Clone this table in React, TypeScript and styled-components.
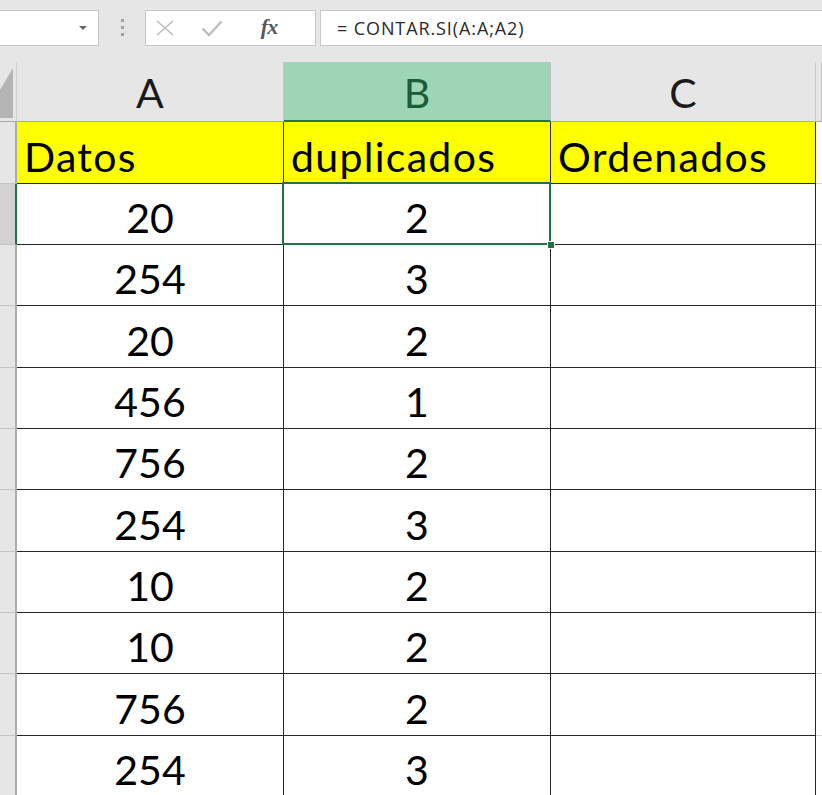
import React from "react";
import styled, { createGlobalStyle } from "styled-components";

const Global = createGlobalStyle`
  html, body { margin: 0; padding: 0; background: #e6e6e6; overflow: hidden; }
  #root { width: 822px; height: 795px; overflow: hidden; }
`;

const CELL_FONT = `"Lato", "Open Sans", sans-serif`;

const Page = styled.div`
  width: 822px;
  height: 795px;
  background: #e6e6e6;
  display: flex;
  flex-direction: column;
  overflow: hidden;
`;

const Toolbar = styled.div`
  height: 62px;
  box-sizing: border-box;
  padding-top: 10px;
  display: flex;
  align-items: flex-start;
  flex-shrink: 0;
`;

const Box = styled.div<{ $w?: number; $ml?: number; $grow?: boolean }>`
  height: 36px;
  box-sizing: border-box;
  background: #fff;
  border: 1px solid #c6c6c6;
  display: flex;
  align-items: center;
  margin-left: ${(p) => p.$ml ?? 0}px;
  ${(p) => (p.$w ? `width: ${p.$w}px;` : "")}
  ${(p) => (p.$grow ? "flex: 1; border-right: none;" : "")}
`;

const NameBox = styled(Box)`
  border-left: none;
  justify-content: flex-end;
  padding-right: 11px;
`;

const Caret = styled.div`
  width: 0;
  height: 0;
  border-left: 4px solid transparent;
  border-right: 4px solid transparent;
  border-top: 4px solid #666;
`;

const Grip = styled.div`
  width: 3px;
  margin: 9px 0 0 22px;
  display: flex;
  flex-direction: column;
  gap: 4px;
  span {
    display: block;
    width: 3px;
    height: 3px;
    background: #a0a0a0;
  }
`;

const IconSlot = styled.div<{ $w: number }>`
  width: ${(p) => p.$w}px;
  display: flex;
  align-items: center;
  justify-content: center;
`;

const Fx = styled.span`
  font-family: "Liberation Serif", "DejaVu Serif", serif;
  font-style: italic;
  font-weight: bold;
  font-size: 22px;
  color: #595959;
  letter-spacing: -1px;
  line-height: 1;
  margin-top: -2px;
`;

const FormulaText = styled.span`
  font-family: "Open Sans", "Noto Sans", sans-serif;
  font-size: 18px;
  letter-spacing: 0.9px;
  color: #2b2b2b;
  padding-left: 16px;
  white-space: nowrap;
`;

const Sheet = styled.div<{ $rows: string }>`
  display: grid;
  grid-template-columns: 17px 267px 267px 265px 1fr;
  grid-template-rows: ${(p) => p.$rows};
  flex-shrink: 0;
`;

const Corner = styled.div`
  background: #e6e6e6;
  border-right: 1px solid #d0d0d0;
  border-bottom: 1px solid #ababab;
  box-sizing: border-box;
  position: relative;
  svg { position: absolute; left: 0; top: 0; }
`;

const ColHead = styled.div<{ $active?: boolean }>`
  box-sizing: border-box;
  background: ${(p) => (p.$active ? "#9fd5b7" : "#e6e6e6")};
  color: ${(p) => (p.$active ? "#1b5e36" : "#1a1a1a")};
  border-right: 1px solid ${(p) => (p.$active ? "#c0c0c0" : "#c8c8c8")};
  border-bottom: ${(p) => (p.$active ? "2px solid #217346" : "1px solid #ababab")};
  font-family: ${CELL_FONT};
  font-size: 41px;
  display: flex;
  align-items: center;
  justify-content: center;
  padding-top: 2px;
`;

const RowHead = styled.div<{ $active?: boolean }>`
  box-sizing: border-box;
  background: ${(p) => (p.$active ? "#d2d2d2" : "#e6e6e6")};
  border-right: ${(p) => (p.$active ? "2px solid #217346" : "2px solid #ababab")};
  border-bottom: 1px solid #c4c4c4;
`;

const Cell = styled.div<{ $fill?: string; $text?: boolean }>`
  box-sizing: border-box;
  background: ${(p) => p.$fill ?? "#fff"};
  border-right: 1px solid #262626;
  border-bottom: 1px solid #262626;
  font-family: ${CELL_FONT};
  font-size: 41px;
  letter-spacing: ${(p) => (p.$text ? "1.3px" : "0")};
  color: #000;
  display: flex;
  align-items: flex-end;
  justify-content: ${(p) => (p.$text ? "flex-start" : "center")};
  padding: 0 0 6px ${(p) => (p.$text ? "7px" : "0")};
  line-height: 1;
  position: relative;
`;

const EmptyCell = styled.div`
  background: #fff;
  border-bottom: 1px solid #d4d4d4;
`;

const Selection = styled.div`
  position: absolute;
  left: -2px;
  top: -2px;
  right: -1px;
  bottom: -1px;
  border: 2px solid #217346;
  pointer-events: none;
`;

const Handle = styled.div`
  position: absolute;
  right: -5px;
  bottom: -5px;
  width: 6px;
  height: 6px;
  background: #217346;
  border: 1px solid #fff;
  z-index: 2;
`;

const data: [string, string][] = [
  ["20", "2"],
  ["254", "3"],
  ["20", "2"],
  ["456", "1"],
  ["756", "2"],
  ["254", "3"],
  ["10", "2"],
  ["10", "2"],
  ["756", "2"],
  ["254", "3"],
];

const rowHeights = [60, 62, 61, 61, 62, 61, 61, 62, 61, 61, 62, 61];

export default function App() {
  return (
    <Page>
      <Global />
      <Toolbar>
        <NameBox $w={99}>
          <Caret />
        </NameBox>
        <Grip>
          <span />
          <span />
          <span />
        </Grip>
        <Box $w={171} $ml={21}>
          <IconSlot $w={37}>
            <svg width="20" height="16" viewBox="0 0 20 16">
              <path d="M2 1 L18 15 M18 1 L2 15" stroke="#bdbdbd" strokeWidth="1.6" fill="none" />
            </svg>
          </IconSlot>
          <IconSlot $w={58}>
            <svg width="22" height="17" viewBox="0 0 22 17">
              <path d="M1.5 8.5 L8 15 L20.5 1.5" stroke="#bdbdbd" strokeWidth="2.4" fill="none" />
            </svg>
          </IconSlot>
          <IconSlot $w={56}>
            <Fx>fx</Fx>
          </IconSlot>
        </Box>
        <Box $grow $ml={4}>
          <FormulaText>= CONTAR.SI(A:A;A2)</FormulaText>
        </Box>
      </Toolbar>
      <Sheet $rows={rowHeights.map((h) => `${h}px`).join(" ")}>
        <Corner>
          <svg width="16" height="60" viewBox="0 0 16 60">
            <polygon points="0,28 13,6 13,56 0,56" fill="#b4b4b4" />
          </svg>
        </Corner>
        <ColHead>A</ColHead>
        <ColHead $active>B</ColHead>
        <ColHead>C</ColHead>
        <ColHead />

        <RowHead />
        <Cell $fill="#ffff00" $text>Datos</Cell>
        <Cell $fill="#ffff00" $text>duplicados</Cell>
        <Cell $fill="#ffff00" $text>Ordenados</Cell>
        <EmptyCell />

        {data.map(([a, b], i) => (
          <React.Fragment key={i}>
            <RowHead $active={i === 0} />
            <Cell>{a}</Cell>
            <Cell>
              {b}
              {i === 0 && (
                <>
                  <Selection />
                  <Handle />
                </>
              )}
            </Cell>
            <Cell />
            <EmptyCell />
          </React.Fragment>
        ))}
      </Sheet>
    </Page>
  );
}
